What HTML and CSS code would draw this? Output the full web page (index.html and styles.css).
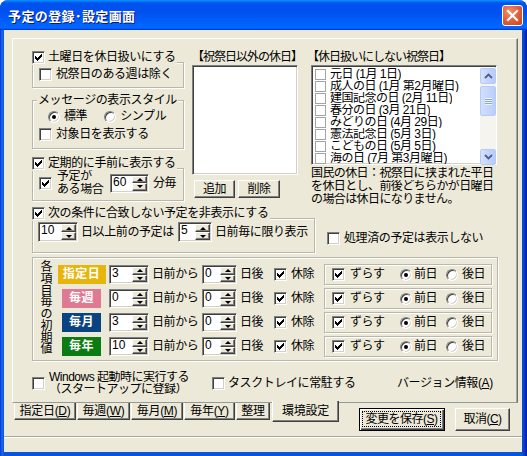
FILE: index.html
```html
<!DOCTYPE html>
<html lang="ja">
<head>
<meta charset="utf-8">
<title>予定の登録･設定画面</title>
<link rel="stylesheet" href="styles.css">
</head>
<body>
<div class="window">
  <div class="titlebar">
    <span class="title">予定の登録･設定画面</span>
    <span class="close"><svg width="21" height="21" viewBox="0 0 21 21"><path d="M6 6 L15 15 M15 6 L6 15" stroke="#fff" stroke-width="2.2" stroke-linecap="square"/></svg></span>
  </div>
  <div class="client">
    <div class="panel">
      <div class="top">
        <div class="colA">
          <div class="grp g1">
            <div class="head"><span class="cb"><svg class="ck" width="7" height="7" viewBox="0 0 7 7"><path d="M0 2h1v1h1v1h1v-1h1v-1h1v-1h1v-1h1v3h-1v1h-1v1h-1v1h-1v1h-1v-1h-1v-1h-1z"/></svg></span><span class="lt">土曜日を休日扱いにする</span></div>
            <div class="row in1"><span class="cb"></span><span class="lt">祝祭日のある週は除く</span></div>
          </div>
          <div class="grp g2">
            <div class="legend">メッセージの表示スタイル</div>
            <div class="row radios"><span class="rb on"></span><span class="lt">標準</span><span class="rb r2"></span><span class="lt">シンプル</span></div>
            <div class="row in1 r3"><span class="cb"></span><span class="lt">対象日を表示する</span></div>
          </div>
          <div class="grp g3">
            <div class="head"><span class="cb"><svg class="ck" width="7" height="7" viewBox="0 0 7 7"><path d="M0 2h1v1h1v1h1v-1h1v-1h1v-1h1v-1h1v3h-1v1h-1v1h-1v1h-1v1h-1v-1h-1v-1h-1z"/></svg></span><span class="lt">定期的に手前に表示する</span></div>
            <div class="row in1 r4">
              <span class="cb"><svg class="ck" width="7" height="7" viewBox="0 0 7 7"><path d="M0 2h1v1h1v1h1v-1h1v-1h1v-1h1v-1h1v3h-1v1h-1v1h-1v1h-1v1h-1v-1h-1v-1h-1z"/></svg></span>
              <span class="two"><span class="ln">予定が</span><span class="ln">ある場合</span></span>
              <span class="spin w39"><span class="val">60</span><span class="arr"><i class="up"></i><i class="dn"></i></span></span>
              <span class="lt unit">分毎</span>
            </div>
          </div>
        </div>
        <div class="colB">
          <div class="lbl">【祝祭日以外の休日】</div>
          <div class="listbox lb1"></div>
          <div class="pbtns"><span class="pbtn b1">追加</span><span class="pbtn b2">削除</span></div>
        </div>
        <div class="colC">
          <div class="lbl">【休日扱いにしない祝祭日】</div>
          <div class="listbox lb2">
            <div class="items">
              <div class="item"><span class="icb"></span><span class="itx">元日 (1月 1日)</span></div>
              <div class="item"><span class="icb"></span><span class="itx">成人の日 (1月 第2月曜日)</span></div>
              <div class="item"><span class="icb"></span><span class="itx">建国記念の日 (2月 11日)</span></div>
              <div class="item"><span class="icb"></span><span class="itx">春分の日 (3月 21日)</span></div>
              <div class="item"><span class="icb"></span><span class="itx">みどりの日 (4月 29日)</span></div>
              <div class="item"><span class="icb"></span><span class="itx">憲法記念日 (5月 3日)</span></div>
              <div class="item"><span class="icb"></span><span class="itx">こどもの日 (5月 5日)</span></div>
              <div class="item"><span class="icb"></span><span class="itx">海の日 (7月 第3月曜日)</span></div>
            </div>
            <div class="sbar">
              <div class="sbtn"><svg width="9" height="6" viewBox="0 0 9 6"><path d="M1 5 L4.5 1.5 L8 5" fill="none" stroke="#4D6185" stroke-width="1.8"/></svg></div>
              <div class="strk t1"></div>
              <div class="sthumb"><span class="grip"></span></div>
              <div class="strk t2"></div>
              <div class="sbtn"><svg width="9" height="6" viewBox="0 0 9 6"><path d="M1 1 L4.5 4.5 L8 1" fill="none" stroke="#4D6185" stroke-width="1.8"/></svg></div>
            </div>
          </div>
          <div class="note"><span class="ln">国民の休日：祝祭日に挟まれた平日</span><span class="ln">を休日とし、前後どちらかが日曜日</span><span class="ln">の場合は休日になりません。</span></div>
        </div>
      </div>

      <div class="mid">
        <div class="grp g4">
          <div class="head"><span class="cb"><svg class="ck" width="7" height="7" viewBox="0 0 7 7"><path d="M0 2h1v1h1v1h1v-1h1v-1h1v-1h1v-1h1v3h-1v1h-1v1h-1v1h-1v1h-1v-1h-1v-1h-1z"/></svg></span><span class="lt">次の条件に合致しない予定を非表示にする</span></div>
          <div class="row r5">
            <span class="spin w40 h20"><span class="val">10</span><span class="arr"><i class="up"></i><i class="dn"></i></span></span>
            <span class="lt t-a">日以上前の予定は</span>
            <span class="spin w34 h20"><span class="val">5</span><span class="arr"><i class="up"></i><i class="dn"></i></span></span>
            <span class="lt t-b">日前毎に限り表示</span>
          </div>
        </div>
        <div class="row done"><span class="cb"></span><span class="lt">処理済の予定は表示しない</span></div>
      </div>

      <div class="grp g5">
        <div class="vlabel">各項目毎の初期値</div>
        <div class="drows">
          <div class="drow">
            <div class="tagcell"><span class="tag gold">指定日</span></div>
            <span class="spin w40"><span class="val">3</span><span class="arr"><i class="up"></i><i class="dn"></i></span></span>
            <span class="lt c1">日前から</span>
            <span class="spin w35"><span class="val">0</span><span class="arr"><i class="up"></i><i class="dn"></i></span></span>
            <span class="lt c2">日後</span>
            <span class="cb"><svg class="ck" width="7" height="7" viewBox="0 0 7 7"><path d="M0 2h1v1h1v1h1v-1h1v-1h1v-1h1v-1h1v3h-1v1h-1v1h-1v1h-1v1h-1v-1h-1v-1h-1z"/></svg></span>
            <span class="lt c3">休除</span>
            <div class="grp shift">
              <span class="cb"><svg class="ck" width="7" height="7" viewBox="0 0 7 7"><path d="M0 2h1v1h1v1h1v-1h1v-1h1v-1h1v-1h1v3h-1v1h-1v1h-1v1h-1v1h-1v-1h-1v-1h-1z"/></svg></span>
              <span class="lt s1">ずらす</span>
              <span class="rb on"></span><span class="lt s2">前日</span>
              <span class="rb"></span><span class="lt s3">後日</span>
            </div>
          </div>
          <div class="drow">
            <div class="tagcell"><span class="tag pink">毎週</span></div>
            <span class="spin w40"><span class="val">0</span><span class="arr"><i class="up"></i><i class="dn"></i></span></span>
            <span class="lt c1">日前から</span>
            <span class="spin w35"><span class="val">0</span><span class="arr"><i class="up"></i><i class="dn"></i></span></span>
            <span class="lt c2">日後</span>
            <span class="cb"><svg class="ck" width="7" height="7" viewBox="0 0 7 7"><path d="M0 2h1v1h1v1h1v-1h1v-1h1v-1h1v-1h1v3h-1v1h-1v1h-1v1h-1v1h-1v-1h-1v-1h-1z"/></svg></span>
            <span class="lt c3">休除</span>
            <div class="grp shift">
              <span class="cb"><svg class="ck" width="7" height="7" viewBox="0 0 7 7"><path d="M0 2h1v1h1v1h1v-1h1v-1h1v-1h1v-1h1v3h-1v1h-1v1h-1v1h-1v1h-1v-1h-1v-1h-1z"/></svg></span>
              <span class="lt s1">ずらす</span>
              <span class="rb on"></span><span class="lt s2">前日</span>
              <span class="rb"></span><span class="lt s3">後日</span>
            </div>
          </div>
          <div class="drow">
            <div class="tagcell"><span class="tag navy">毎月</span></div>
            <span class="spin w40"><span class="val">3</span><span class="arr"><i class="up"></i><i class="dn"></i></span></span>
            <span class="lt c1">日前から</span>
            <span class="spin w35"><span class="val">0</span><span class="arr"><i class="up"></i><i class="dn"></i></span></span>
            <span class="lt c2">日後</span>
            <span class="cb"><svg class="ck" width="7" height="7" viewBox="0 0 7 7"><path d="M0 2h1v1h1v1h1v-1h1v-1h1v-1h1v-1h1v3h-1v1h-1v1h-1v1h-1v1h-1v-1h-1v-1h-1z"/></svg></span>
            <span class="lt c3">休除</span>
            <div class="grp shift">
              <span class="cb"><svg class="ck" width="7" height="7" viewBox="0 0 7 7"><path d="M0 2h1v1h1v1h1v-1h1v-1h1v-1h1v-1h1v3h-1v1h-1v1h-1v1h-1v1h-1v-1h-1v-1h-1z"/></svg></span>
              <span class="lt s1">ずらす</span>
              <span class="rb on"></span><span class="lt s2">前日</span>
              <span class="rb"></span><span class="lt s3">後日</span>
            </div>
          </div>
          <div class="drow">
            <div class="tagcell"><span class="tag green">毎年</span></div>
            <span class="spin w40"><span class="val">10</span><span class="arr"><i class="up"></i><i class="dn"></i></span></span>
            <span class="lt c1">日前から</span>
            <span class="spin w35"><span class="val">0</span><span class="arr"><i class="up"></i><i class="dn"></i></span></span>
            <span class="lt c2">日後</span>
            <span class="cb"><svg class="ck" width="7" height="7" viewBox="0 0 7 7"><path d="M0 2h1v1h1v1h1v-1h1v-1h1v-1h1v-1h1v3h-1v1h-1v1h-1v1h-1v1h-1v-1h-1v-1h-1z"/></svg></span>
            <span class="lt c3">休除</span>
            <div class="grp shift">
              <span class="cb"><svg class="ck" width="7" height="7" viewBox="0 0 7 7"><path d="M0 2h1v1h1v1h1v-1h1v-1h1v-1h1v-1h1v3h-1v1h-1v1h-1v1h-1v1h-1v-1h-1v-1h-1z"/></svg></span>
              <span class="lt s1">ずらす</span>
              <span class="rb on"></span><span class="lt s2">前日</span>
              <span class="rb"></span><span class="lt s3">後日</span>
            </div>
          </div>
        </div>
      </div>

      <div class="bottom">
        <span class="cb"></span>
        <span class="two win"><span class="ln">Windows 起動時に実行する</span><span class="ln">（スタートアップに登録）</span></span>
        <span class="cb"></span>
        <span class="lt tray">タスクトレイに常駐する</span>
        <span class="lt ver">バージョン情報(<u>A</u>)</span>
      </div>
    </div>

    <div class="lower">
      <div class="tabs">
        <span class="tab tw1">指定日(<u>D</u>)</span>
        <span class="tab tw2">毎週(<u>W</u>)</span>
        <span class="tab tw3">毎月(<u>M</u>)</span>
        <span class="tab tw4">毎年(<u>Y</u>)</span>
        <span class="tab tw5">整理</span>
        <span class="tab sel">環境設定</span>
      </div>
      <div class="dbtns">
        <span class="dbtn def"><span class="focus">変更を保存(<u>S</u>)</span></span>
        <span class="dbtn cancel">取消(<u>C</u>)</span>
      </div>
    </div>
    <div class="status"></div>
  </div>
</div>
</body>
</html>
```

FILE: styles.css
```css
* { box-sizing: border-box; }
html, body { margin: 0; padding: 0; }
body {
  width: 527px; height: 456px; overflow: hidden; background: #fff;
  font-family: "Liberation Sans", "Noto Sans CJK JP", sans-serif;
  font-size: 12px; line-height: 13px; color: #000; letter-spacing: -0.4px;
}
u { text-decoration: underline; text-underline-offset: 1px; }
.ln { display: block; white-space: nowrap; overflow: hidden; }

.window {
  width: 527px; height: 456px; display: flex; flex-direction: column;
  background: linear-gradient(to right, #0831D9 0, #166AEE 2px, #0855DD 4px, #0855DD 521px, #0A3FD0 524px, #001EA0 527px);
  border-radius: 8px 8px 0 0; overflow: hidden;
}
.titlebar {
  height: 30px; flex: none; display: flex; align-items: center; padding: 0 4px 0 8px;
  background: linear-gradient(to bottom, #0997FF 0%, #0053EE 10%, #0050EE 40%, #0066FF 86%, #0066FF 92%, #005BFF 95%, #003DD7 97%, #003DD7 100%);
}
.title {
  flex: 1; color: #fff; font-weight: bold; font-size: 13px; letter-spacing: 0.4px;
  font-family: "Noto Sans CJK JP", sans-serif;
  text-shadow: 1px 1px 0 #0A1883; line-height: 16px; margin-top: 1px;
}
.close {
  width: 21px; height: 21px; border: 1px solid #fff; border-radius: 3px; margin-top: 1px;
  background: radial-gradient(circle at 35% 30%, #F2916F 0, #E4623F 45%, #C9411E 100%);
  display: flex; align-items: center; justify-content: center; overflow: hidden;
}
.close svg { display: block; margin: -1px; }

.client {
  height: 422px; margin: 0 5px 0 4px; background: #ECE9D8;
  display: flex; flex-direction: column; padding-top: 8px;
}

.panel {
  height: 365px; flex: none; margin: 0 4px 0 8px;
  border: 1px solid; border-color: #fff #716F64 #919B9C #fff;
  box-shadow: inset -1px 0 0 #ACA899;
  padding: 11px 0 0 19px; display: flex; flex-direction: column;
}

/* common controls */
.row { display: flex; align-items: center; }
.lt { flex: none; white-space: nowrap; }
.cb {
  flex: none; width: 13px; height: 13px; background: #fff;
  border: 1px solid; border-color: #808080 #fff #fff #808080;
  box-shadow: inset 1px 1px 0 #404040, inset -1px -1px 0 #D4D0C8;
  display: flex; align-items: center; justify-content: center;
}
.ck { display: block; fill: #000; }
.rb {
  flex: none; width: 12px; height: 12px; border-radius: 50%; background: #fff;
  border: 1px solid; border-color: #808080 #fff #fff #808080;
  box-shadow: inset 1px 1px 0 #404040, inset -1px -1px 0 #D4D0C8;
  display: flex; align-items: center; justify-content: center;
}
.rb.on::after { content: ""; width: 4px; height: 4px; border-radius: 50%; background: #000; }

.grp {
  border: 1px solid #B9B7AA;
  box-shadow: inset 1px 1px 0 #fff, 1px 1px 0 #fff;
  display: flex; flex-direction: column; flex: none;
}
.head {
  display: flex; align-items: center; height: 15px; margin: -13px 0 0 -1px;
  background: #ECE9D8; align-self: flex-start; padding-right: 1px;
}
.head .lt, .cb + .lt { margin-left: 3px; }
.legend {
  align-self: flex-start; height: 13px; margin: -7px 0 0 4px; padding: 0 1px;
  background: #ECE9D8; white-space: nowrap;
}

.spin {
  flex: none; display: flex; height: 19px; background: #fff;
  border: 1px solid; border-color: #808080 #fff #fff #808080;
  box-shadow: inset 1px 1px 0 #404040, inset -1px -1px 0 #D4D0C8;
  padding: 1px;
}
.spin.h20 { height: 20px; }
.spin .val { flex: 1; padding-left: 1px; line-height: 13px; letter-spacing: 0; }
.spin .arr { width: 15px; display: flex; flex-direction: column; flex: none; }
.spin .arr i {
  flex: 1; background: #ECE9D8;
  border: 1px solid; border-color: #fff #404040 #404040 #fff;
  box-shadow: inset -1px -1px 0 #808080;
  display: flex; align-items: center; justify-content: center;
}
.spin .arr i::after { content: ""; border-left: 3px solid transparent; border-right: 3px solid transparent; }
.spin .arr .up::after { border-bottom: 3px solid #000; }
.spin .arr .dn::after { border-top: 3px solid #000; }
.w39 { width: 39px; }
.w40 { width: 40px; }
.w35 { width: 35px; }
.w34 { width: 34px; }

.listbox {
  background: #fff; border: 1px solid; border-color: #808080 #fff #fff #808080;
  box-shadow: inset 1px 1px 0 #404040, inset -1px -1px 0 #D4D0C8;
  flex: none;
}

/* top section */
.top { display: flex; height: 155px; flex: none; }
.colA { width: 152px; display: flex; flex-direction: column; flex: none; }
.g1 { height: 26px; margin-top: 12px; }
.in1 { margin-left: 6px; height: 13px; }
.g1 .in1 { margin-top: 3px; }
.g1 .in1 .lt { margin-left: 4px; }
.g2 { height: 49px; margin-top: 12px; }
.radios { margin: 3px 0 0 15px; height: 13px; }
.radios .lt { margin-left: 4px; }
.radios .r2 { margin-left: 17px; }
.r3 { margin-top: 5px; }
.r3 .lt { margin-left: 4px; }
.g3 { height: 33px; margin-top: 19px; }
.r4 { height: 26px; margin-top: -1px; }
.two { flex: none; white-space: nowrap; display: flex; flex-direction: column; }
.r4 .two { width: 53px; margin-left: 5px; }
.r4 .two .ln { height: 13px; line-height: 13px; }
.r4 .unit { margin-left: 4px; }

.colB { width: 106px; margin-left: 8px; display: flex; flex-direction: column; flex: none; }
.lbl { height: 13px; margin-top: 1px; white-space: nowrap; letter-spacing: -1px; }
.lb1 { height: 110px; margin-top: 1px; width: 106px; }
.pbtns { display: flex; margin: 5px 0 0 2px; gap: 3px; }
.pbtn {
  height: 18px; display: flex; align-items: center; justify-content: center;
  background: #ECE9D8; border: 1px solid; border-color: #fff #404040 #404040 #fff;
  box-shadow: inset -1px -1px 0 #808080;
}
.b1 { width: 41px; }
.b2 { width: 42px; }

.colC { width: 192px; margin-left: 7px; display: flex; flex-direction: column; flex: none; }
.colC .lbl { padding-left: 2px; }
.lb2 { width: 186px; height: 100px; margin: 1px 0 0 6px; padding: 2px; display: flex; }
.items { width: 166px; flex: none; }
.item { height: 12px; display: flex; align-items: center; white-space: nowrap; letter-spacing: -0.5px; }
.itx { display: block; height: 12px; line-height: 12px; overflow: hidden; }
.icb { width: 11px; height: 11px; border: 1px solid #A4A4A4; background: #fff; margin: 0 4px 0 1px; flex: none; }
.sbar { width: 16px; flex: none; display: flex; flex-direction: column; background: #F5F4EF; }
.sbtn {
  height: 16px; flex: none; border: 1px solid #B7CAF5; border-radius: 2px;
  background: linear-gradient(to right, #D6E3FE, #C3D4FC 50%, #B8CCF9);
  display: flex; align-items: center; justify-content: center;
}
.sbtn svg { display: block; }
.strk { flex: none; }
.t1 { height: 2px; }
.t2 { height: 33px; }
.sthumb {
  height: 30px; flex: none; border: 1px solid #B7CAF5; border-radius: 2px;
  background: linear-gradient(to right, #D3E0FD, #C6D6FC 50%, #BBCEF9);
  display: flex; align-items: center; justify-content: center;
}
.grip {
  width: 7px; height: 7px;
  background: repeating-linear-gradient(to bottom, #EEF4FE 0, #EEF4FE 1px, #8CA5DC 1px, #8CA5DC 2px);
}
.note { margin: 2px 0 0 6px; letter-spacing: -0.6px; }
.note .ln { height: 13px; line-height: 13px; }

/* middle */
.mid { display: flex; align-items: flex-start; flex: none; }
.g4 { width: 283px; height: 35px; margin-top: 13px; }
.r5 { margin: 1px 0 0 5px; height: 20px; }
.t-a { width: 97px; margin-left: 3px; }
.t-b { margin-left: 3px; }
.done { margin: 26px 0 0 12px; height: 15px; }
.done .lt { margin-left: 4px; }

/* defaults group */
.g5 { width: 466px; height: 104px; margin-top: 4px; flex-direction: row; align-items: flex-start; }
.vlabel {
  width: 13px; margin: 4px 0 0 7px; line-height: 11.75px; letter-spacing: 0;
  word-break: break-all; flex: none; text-align: center;
}
.drows { display: flex; flex-direction: column; gap: 3px; margin-top: 6px; }
.drow { display: flex; align-items: center; height: 21px; }
.tagcell { width: 49px; margin-left: 4px; display: flex; justify-content: center; flex: none; }
.tag {
  height: 19px; display: flex; align-items: center; justify-content: center;
  color: #fff; font-weight: bold; font-size: 12px; letter-spacing: 0.5px;
}
.gold { width: 48px; background: #E7B60C; }
.pink { width: 39px; background: #E07A92; }
.navy { width: 39px; background: #0A4382; }
.green { width: 39px; background: #0A7C12; }
.drow .spin.w40 { margin-left: 3px; }
.c1 { width: 50px; margin-left: 3px; }
.c2 { width: 34px; margin-left: 3px; }
.drow .cb + .c3 { width: 33px; margin-left: 4px; }
.shift { width: 168px; height: 21px; flex-direction: row; align-items: center; }
.shift .cb { margin-left: 7px; }
.shift .cb + .s1 { width: 50px; margin-left: 5px; }
.s2 { width: 32px; margin-left: 2px; }
.s3 { margin-left: 4px; }

/* bottom row */
.bottom { display: flex; align-items: center; height: 24px; margin-top: 10px; flex: none; }
.win { width: 160px; margin-left: 4px; letter-spacing: -0.5px; }
.win .ln { height: 12px; line-height: 12px; }
.win + .cb { margin-left: 3px; }
.bottom .tray { width: 160px; margin-left: 3px; }
.ver { margin-left: 9px; }

/* lower: tabs + buttons */
.lower { height: 33px; flex: none; display: flex; align-items: flex-start; }
.tabs { display: flex; gap: 1px; margin-left: 10px; }
.tab {
  height: 17px; display: flex; align-items: center; justify-content: center;
  background: #ECE9D8; border-left: 1px solid #fff; border-right: 1px solid #404040;
  border-bottom: 1px solid #404040; box-shadow: inset -1px -1px 0 #808080;
  white-space: nowrap; letter-spacing: -0.3px; padding-top: 1px;
}
.tw1 { width: 62px; }
.tw2 { width: 53px; }
.tw3 { width: 52px; }
.tw4 { width: 51px; }
.tw5 { width: 34px; }
.tab.sel { width: 67px; height: 21px; margin: -2px 0 0 1px; padding-top: 0; position: relative; }
.dbtns { display: flex; gap: 10px; margin: 5px 12px 0 auto; }
.dbtn {
  height: 23px; display: flex; align-items: center; justify-content: center;
  background: #ECE9D8; white-space: nowrap;
}
.def {
  width: 86px; border: 1px solid #000;
  box-shadow: inset 1px 1px 0 #fff, inset -1px -1px 0 #404040, inset -2px -2px 0 #808080;
  padding: 2px 3px 3px 2px;
}
.focus {
  flex: 1; align-self: stretch; border: 1px dotted #000;
  display: flex; align-items: center; justify-content: center; letter-spacing: -0.5px;
}
.cancel {
  width: 55px; border: 1px solid; border-color: #fff #404040 #404040 #fff;
  box-shadow: inset -1px -1px 0 #808080; letter-spacing: -0.5px;
}
.status {
  height: 16px; flex: none; border-top: 1px solid #ACA899;
  box-shadow: inset 0 1px 0 #fff;
}
```
